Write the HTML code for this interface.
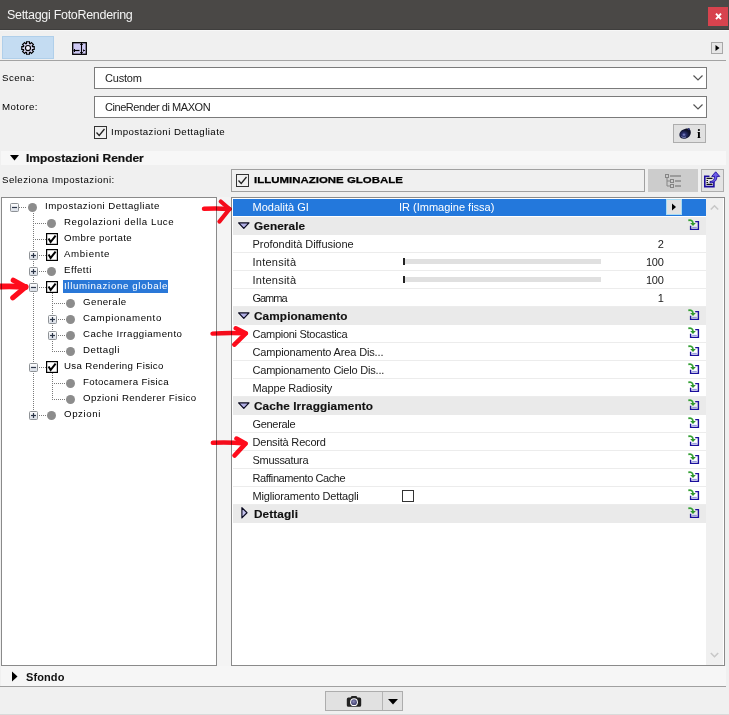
<!DOCTYPE html>
<html><head><meta charset="utf-8"><style>
html,body{margin:0;padding:0;}
body{width:729px;height:715px;overflow:hidden;position:relative;background:#f0f0f0;font-family:"Liberation Sans",sans-serif;}
.a{position:absolute;}
.t{white-space:nowrap;}
svg{display:block;overflow:visible;}
</style></head><body>
<div class="a" style="left:0px;top:0px;width:729px;height:29px;background:#4a4846;"></div>
<div class="a" style="left:0px;top:29px;width:729px;height:1px;background:#3f3e3d;"></div>
<div class="a" style="left:0px;top:30px;width:729px;height:1px;background:#f7f7f7;"></div>
<div class="a t" style="top:8.92px;font-size:12.5px;line-height:12.5px;color:#f4f4f4;left:7px;letter-spacing:-0.3px;">Settaggi FotoRendering</div>
<div class="a" style="left:708px;top:7px;width:20px;height:19px;background:#d7434e;"></div>
<svg class="a" style="left:708px;top:7px;" width="20" height="19" viewBox="0 0 20 19"><path d="M8 6.6 L13 12.2 M13 6.6 L8 12.2" stroke="#fff" stroke-width="1.9" stroke-linecap="butt"/></svg>
<div class="a" style="left:2px;top:36px;width:52px;height:23px;background:#c4dcf2;box-shadow:inset 0 0 0 1px #b0cfea;"></div>
<svg class="a" style="left:21px;top:41px;" width="14" height="14" viewBox="0 0 14 14"><path d="M5.55 2.53 L5.55 0.77 L8.45 0.77 L8.45 2.53 L9.14 2.81 L10.38 1.57 L12.43 3.62 L11.19 4.86 L11.47 5.55 L13.23 5.55 L13.23 8.45 L11.47 8.45 L11.19 9.14 L12.43 10.38 L10.38 12.43 L9.14 11.19 L8.45 11.47 L8.45 13.23 L5.55 13.23 L5.55 11.47 L4.86 11.19 L3.62 12.43 L1.57 10.38 L2.81 9.14 L2.53 8.45 L0.77 8.45 L0.77 5.55 L2.53 5.55 L2.81 4.86 L1.57 3.62 L3.62 1.57 L4.86 2.81Z" fill="#dcdcf6" stroke="#000" stroke-width="1.15" stroke-linejoin="miter"/><circle cx="7" cy="7" r="2.55" fill="#f4f4ff" stroke="#000" stroke-width="1.15"/></svg>
<svg class="a" style="left:72px;top:42px;" width="15" height="13" viewBox="0 0 15 13"><rect x="0.7" y="0.7" width="13.6" height="11.6" fill="#cfcaf4" stroke="#000" stroke-width="1.3"/><path d="M9.5 1 V12" stroke="#000" stroke-width="1.1"/><path d="M8.2 2.5 H10.8 M8.2 10.5 H10.8" stroke="#000" stroke-width="1"/><path d="M1.5 8.5 H7.5" stroke="#000" stroke-width="1.2"/><path d="M2.5 7 V10" stroke="#000" stroke-width="1"/><path d="M13 8.5 H11.3 M12 7.6 L11 8.5 L12 9.4" stroke="#000" stroke-width="0.9" fill="none"/></svg>
<div class="a" style="left:711px;top:42px;width:12px;height:12px;background:#e6e6e6;box-shadow:inset 0 0 0 1px #a8a8a8;"></div>
<svg class="a" style="left:711px;top:42px;" width="12" height="12" viewBox="0 0 12 12"><path d="M4.5 3 L8.5 6 L4.5 9 Z" fill="#000"/></svg>
<div class="a" style="left:0px;top:60px;width:726px;height:1px;background:#a3a3a3;"></div>
<div class="a t" style="top:72.59px;font-size:9.7px;line-height:9.7px;color:#000;left:2px;letter-spacing:0.45px;">Scena:</div>
<div class="a" style="left:94px;top:67px;width:613px;height:22px;background:#fff;box-shadow:inset 0 0 0 1px #7a7a7a;"></div>
<div class="a t" style="top:72.69px;font-size:11px;line-height:11px;color:#222;left:105px;letter-spacing:-0.2px;">Custom</div>
<svg class="a" style="left:692px;top:74px;" width="12" height="8" viewBox="0 0 12 8"><path d="M1.5 1.5 L6 6 L10.5 1.5" stroke="#555" stroke-width="1.2" fill="none"/></svg>
<div class="a t" style="top:101.69px;font-size:9.7px;line-height:9.7px;color:#000;left:2px;letter-spacing:0.45px;">Motore:</div>
<div class="a" style="left:94px;top:96px;width:613px;height:22px;background:#fff;box-shadow:inset 0 0 0 1px #7a7a7a;"></div>
<div class="a t" style="top:101.69px;font-size:11px;line-height:11px;color:#222;left:105px;letter-spacing:-0.45px;">CineRender di MAXON</div>
<svg class="a" style="left:692px;top:103px;" width="12" height="8" viewBox="0 0 12 8"><path d="M1.5 1.5 L6 6 L10.5 1.5" stroke="#555" stroke-width="1.2" fill="none"/></svg>
<div class="a" style="left:94px;top:126px;width:13px;height:13px;box-shadow:inset 0 0 0 1px #333;"></div>
<svg class="a" style="left:94px;top:126px;" width="13" height="13" viewBox="0 0 13 13"><path d="M2.5 6.5 L5.2 9.5 L10.5 3" stroke="#222" stroke-width="1.3" fill="none"/></svg>
<div class="a t" style="top:127.29px;font-size:9.7px;line-height:9.7px;color:#000;left:111px;letter-spacing:0.45px;">Impostazioni Dettagliate</div>
<div class="a" style="left:673px;top:124px;width:33px;height:19px;background:#e1e1e1;box-shadow:inset 0 0 0 1px #adadad;"></div>
<svg class="a" style="left:678px;top:127px;" width="15" height="13" viewBox="0 0 15 13"><defs><radialGradient id="cg" cx="0.4" cy="0.6" r="0.55"><stop offset="0" stop-color="#8890d0"/><stop offset="0.3" stop-color="#2a3070"/><stop offset="0.8" stop-color="#101430"/><stop offset="1" stop-color="#0c0e24"/></radialGradient></defs><path d="M7.5 1.8 C10.5 1 13 2.2 12.8 5.5 C12.6 9.5 9.5 12 5.5 11.8 C2.3 11.6 0.8 9 1.6 6.3 C2.3 4 4.8 2.4 7.5 1.8Z" fill="url(#cg)"/><circle cx="10.8" cy="2.2" r="1.1" fill="#2a3070"/><path d="M3.5 9.5 C4.5 10.5 6.5 10.8 8 10" stroke="#c8d0ff" stroke-width="0.8" fill="none" opacity="0.7"/></svg>
<div class="a t" style="top:126.57px;font-size:13.5px;line-height:13.5px;color:#000;left:697px;font-weight:bold;font-family:'Liberation Serif', serif;">i</div>
<div class="a" style="left:1px;top:151px;width:725px;height:14px;background:#f7f7f7;"></div>
<svg class="a" style="left:9px;top:154px;" width="11" height="8" viewBox="0 0 11 8"><path d="M1 1 L10 1 L5.5 6.5 Z" fill="#000"/></svg>
<div class="a t" style="top:152.83px;font-size:11.3px;line-height:11.3px;color:#111;left:26px;font-weight:bold;transform:scaleX(1.06);transform-origin:0 0;-webkit-text-stroke:0.2px #111;">Impostazioni Render</div>
<div class="a t" style="top:175.49px;font-size:9.7px;line-height:9.7px;color:#000;left:2px;letter-spacing:0.45px;">Seleziona Impostazioni:</div>
<div class="a" style="left:231px;top:169px;width:414px;height:23px;background:#f0f0f0;box-shadow:inset 0 0 0 1px #a0a0a0;"></div>
<div class="a" style="left:236px;top:174px;width:13px;height:13px;box-shadow:inset 0 0 0 1px #333;"></div>
<svg class="a" style="left:236px;top:174px;" width="13" height="13" viewBox="0 0 13 13"><path d="M2.5 6.5 L5.2 9.5 L10.5 3" stroke="#222" stroke-width="1.3" fill="none"/></svg>
<div class="a t" style="top:175.42px;font-size:9.9px;line-height:9.9px;color:#000;left:253.5px;font-weight:bold;transform:scaleX(1.16);transform-origin:0 0;-webkit-text-stroke:0.25px #000;">ILLUMINAZIONE GLOBALE</div>
<div class="a" style="left:648px;top:169px;width:50px;height:23px;background:#cccccc;"></div>
<svg class="a" style="left:664px;top:173px;" width="18" height="16" viewBox="0 0 18 16"><g fill="none" stroke="#858585" stroke-width="1"><rect x="1.5" y="1.5" width="3" height="3"/><rect x="6.5" y="6.5" width="3" height="3"/><rect x="6.5" y="11.5" width="3" height="3"/><path d="M3 4.5 V13 H6.5 M3 8 H6.5"/></g><g stroke="#8a8a8a" stroke-width="1.4"><path d="M6 3 H17 M11 8 H17 M11 13 H17"/></g></svg>
<div class="a" style="left:701px;top:169px;width:23px;height:23px;background:#e4e4e4;box-shadow:inset 0 0 0 1px #adadad;"></div>
<svg class="a" style="left:703px;top:171px;" width="19" height="18" viewBox="0 0 19 18"><path d="M6.5 5.2 H1.8 V15.6 H10.9 V11" stroke="#1c0c9e" stroke-width="1.6" fill="none"/><path d="M3.5 7.4 H9.5 M3.5 13.3 H9.5" stroke="#111" stroke-width="1.2"/><path d="M3.5 9.5 H5 M3.5 11.5 H5" stroke="#111" stroke-width="1"/><path d="M7 10.5 C10 10.5 11.5 9 11.5 5.4 H8.7 L12.7 0.8 L16.7 5.4 H13.9 C13.9 9.5 11.5 12 7 11.8 Z" fill="#6c5ce8" stroke="#1c0c9e" stroke-width="0.9" stroke-linejoin="round"/></svg>
<div class="a" style="left:217px;top:197px;width:14px;height:469px;background:#f4f4f4;"></div>
<div class="a" style="left:1px;top:197px;width:216px;height:469px;background:#fff;box-shadow:inset 0 0 0 1px #8a8a8a;"></div>
<div class="a" style="left:231px;top:197px;width:494px;height:469px;background:#fff;box-shadow:inset 0 0 0 1px #8a8a8a;"></div>
<div class="a" style="left:706px;top:198px;width:17px;height:467px;background:#f0f0f0;"></div>
<div class="a" style="left:33px;top:213px;width:1px;height:1px;background:#7a7a7a;"></div>
<div class="a" style="left:33px;top:215px;width:1px;height:1px;background:#7a7a7a;"></div>
<div class="a" style="left:33px;top:217px;width:1px;height:1px;background:#7a7a7a;"></div>
<div class="a" style="left:33px;top:219px;width:1px;height:1px;background:#7a7a7a;"></div>
<div class="a" style="left:33px;top:221px;width:1px;height:1px;background:#7a7a7a;"></div>
<div class="a" style="left:33px;top:223px;width:1px;height:1px;background:#7a7a7a;"></div>
<div class="a" style="left:33px;top:225px;width:1px;height:1px;background:#7a7a7a;"></div>
<div class="a" style="left:33px;top:227px;width:1px;height:1px;background:#7a7a7a;"></div>
<div class="a" style="left:33px;top:229px;width:1px;height:1px;background:#7a7a7a;"></div>
<div class="a" style="left:33px;top:231px;width:1px;height:1px;background:#7a7a7a;"></div>
<div class="a" style="left:33px;top:233px;width:1px;height:1px;background:#7a7a7a;"></div>
<div class="a" style="left:33px;top:235px;width:1px;height:1px;background:#7a7a7a;"></div>
<div class="a" style="left:33px;top:237px;width:1px;height:1px;background:#7a7a7a;"></div>
<div class="a" style="left:33px;top:239px;width:1px;height:1px;background:#7a7a7a;"></div>
<div class="a" style="left:33px;top:241px;width:1px;height:1px;background:#7a7a7a;"></div>
<div class="a" style="left:33px;top:243px;width:1px;height:1px;background:#7a7a7a;"></div>
<div class="a" style="left:33px;top:245px;width:1px;height:1px;background:#7a7a7a;"></div>
<div class="a" style="left:33px;top:247px;width:1px;height:1px;background:#7a7a7a;"></div>
<div class="a" style="left:33px;top:249px;width:1px;height:1px;background:#7a7a7a;"></div>
<div class="a" style="left:33px;top:251px;width:1px;height:1px;background:#7a7a7a;"></div>
<div class="a" style="left:33px;top:253px;width:1px;height:1px;background:#7a7a7a;"></div>
<div class="a" style="left:33px;top:255px;width:1px;height:1px;background:#7a7a7a;"></div>
<div class="a" style="left:33px;top:257px;width:1px;height:1px;background:#7a7a7a;"></div>
<div class="a" style="left:33px;top:259px;width:1px;height:1px;background:#7a7a7a;"></div>
<div class="a" style="left:33px;top:261px;width:1px;height:1px;background:#7a7a7a;"></div>
<div class="a" style="left:33px;top:263px;width:1px;height:1px;background:#7a7a7a;"></div>
<div class="a" style="left:33px;top:265px;width:1px;height:1px;background:#7a7a7a;"></div>
<div class="a" style="left:33px;top:267px;width:1px;height:1px;background:#7a7a7a;"></div>
<div class="a" style="left:33px;top:269px;width:1px;height:1px;background:#7a7a7a;"></div>
<div class="a" style="left:33px;top:271px;width:1px;height:1px;background:#7a7a7a;"></div>
<div class="a" style="left:33px;top:273px;width:1px;height:1px;background:#7a7a7a;"></div>
<div class="a" style="left:33px;top:275px;width:1px;height:1px;background:#7a7a7a;"></div>
<div class="a" style="left:33px;top:277px;width:1px;height:1px;background:#7a7a7a;"></div>
<div class="a" style="left:33px;top:279px;width:1px;height:1px;background:#7a7a7a;"></div>
<div class="a" style="left:33px;top:281px;width:1px;height:1px;background:#7a7a7a;"></div>
<div class="a" style="left:33px;top:283px;width:1px;height:1px;background:#7a7a7a;"></div>
<div class="a" style="left:33px;top:285px;width:1px;height:1px;background:#7a7a7a;"></div>
<div class="a" style="left:33px;top:287px;width:1px;height:1px;background:#7a7a7a;"></div>
<div class="a" style="left:33px;top:289px;width:1px;height:1px;background:#7a7a7a;"></div>
<div class="a" style="left:33px;top:291px;width:1px;height:1px;background:#7a7a7a;"></div>
<div class="a" style="left:33px;top:293px;width:1px;height:1px;background:#7a7a7a;"></div>
<div class="a" style="left:33px;top:295px;width:1px;height:1px;background:#7a7a7a;"></div>
<div class="a" style="left:33px;top:297px;width:1px;height:1px;background:#7a7a7a;"></div>
<div class="a" style="left:33px;top:299px;width:1px;height:1px;background:#7a7a7a;"></div>
<div class="a" style="left:33px;top:301px;width:1px;height:1px;background:#7a7a7a;"></div>
<div class="a" style="left:33px;top:303px;width:1px;height:1px;background:#7a7a7a;"></div>
<div class="a" style="left:33px;top:305px;width:1px;height:1px;background:#7a7a7a;"></div>
<div class="a" style="left:33px;top:307px;width:1px;height:1px;background:#7a7a7a;"></div>
<div class="a" style="left:33px;top:309px;width:1px;height:1px;background:#7a7a7a;"></div>
<div class="a" style="left:33px;top:311px;width:1px;height:1px;background:#7a7a7a;"></div>
<div class="a" style="left:33px;top:313px;width:1px;height:1px;background:#7a7a7a;"></div>
<div class="a" style="left:33px;top:315px;width:1px;height:1px;background:#7a7a7a;"></div>
<div class="a" style="left:33px;top:317px;width:1px;height:1px;background:#7a7a7a;"></div>
<div class="a" style="left:33px;top:319px;width:1px;height:1px;background:#7a7a7a;"></div>
<div class="a" style="left:33px;top:321px;width:1px;height:1px;background:#7a7a7a;"></div>
<div class="a" style="left:33px;top:323px;width:1px;height:1px;background:#7a7a7a;"></div>
<div class="a" style="left:33px;top:325px;width:1px;height:1px;background:#7a7a7a;"></div>
<div class="a" style="left:33px;top:327px;width:1px;height:1px;background:#7a7a7a;"></div>
<div class="a" style="left:33px;top:329px;width:1px;height:1px;background:#7a7a7a;"></div>
<div class="a" style="left:33px;top:331px;width:1px;height:1px;background:#7a7a7a;"></div>
<div class="a" style="left:33px;top:333px;width:1px;height:1px;background:#7a7a7a;"></div>
<div class="a" style="left:33px;top:335px;width:1px;height:1px;background:#7a7a7a;"></div>
<div class="a" style="left:33px;top:337px;width:1px;height:1px;background:#7a7a7a;"></div>
<div class="a" style="left:33px;top:339px;width:1px;height:1px;background:#7a7a7a;"></div>
<div class="a" style="left:33px;top:341px;width:1px;height:1px;background:#7a7a7a;"></div>
<div class="a" style="left:33px;top:343px;width:1px;height:1px;background:#7a7a7a;"></div>
<div class="a" style="left:33px;top:345px;width:1px;height:1px;background:#7a7a7a;"></div>
<div class="a" style="left:33px;top:347px;width:1px;height:1px;background:#7a7a7a;"></div>
<div class="a" style="left:33px;top:349px;width:1px;height:1px;background:#7a7a7a;"></div>
<div class="a" style="left:33px;top:351px;width:1px;height:1px;background:#7a7a7a;"></div>
<div class="a" style="left:33px;top:353px;width:1px;height:1px;background:#7a7a7a;"></div>
<div class="a" style="left:33px;top:355px;width:1px;height:1px;background:#7a7a7a;"></div>
<div class="a" style="left:33px;top:357px;width:1px;height:1px;background:#7a7a7a;"></div>
<div class="a" style="left:33px;top:359px;width:1px;height:1px;background:#7a7a7a;"></div>
<div class="a" style="left:33px;top:361px;width:1px;height:1px;background:#7a7a7a;"></div>
<div class="a" style="left:33px;top:363px;width:1px;height:1px;background:#7a7a7a;"></div>
<div class="a" style="left:33px;top:365px;width:1px;height:1px;background:#7a7a7a;"></div>
<div class="a" style="left:33px;top:367px;width:1px;height:1px;background:#7a7a7a;"></div>
<div class="a" style="left:33px;top:369px;width:1px;height:1px;background:#7a7a7a;"></div>
<div class="a" style="left:33px;top:371px;width:1px;height:1px;background:#7a7a7a;"></div>
<div class="a" style="left:33px;top:373px;width:1px;height:1px;background:#7a7a7a;"></div>
<div class="a" style="left:33px;top:375px;width:1px;height:1px;background:#7a7a7a;"></div>
<div class="a" style="left:33px;top:377px;width:1px;height:1px;background:#7a7a7a;"></div>
<div class="a" style="left:33px;top:379px;width:1px;height:1px;background:#7a7a7a;"></div>
<div class="a" style="left:33px;top:381px;width:1px;height:1px;background:#7a7a7a;"></div>
<div class="a" style="left:33px;top:383px;width:1px;height:1px;background:#7a7a7a;"></div>
<div class="a" style="left:33px;top:385px;width:1px;height:1px;background:#7a7a7a;"></div>
<div class="a" style="left:33px;top:387px;width:1px;height:1px;background:#7a7a7a;"></div>
<div class="a" style="left:33px;top:389px;width:1px;height:1px;background:#7a7a7a;"></div>
<div class="a" style="left:33px;top:391px;width:1px;height:1px;background:#7a7a7a;"></div>
<div class="a" style="left:33px;top:393px;width:1px;height:1px;background:#7a7a7a;"></div>
<div class="a" style="left:33px;top:395px;width:1px;height:1px;background:#7a7a7a;"></div>
<div class="a" style="left:33px;top:397px;width:1px;height:1px;background:#7a7a7a;"></div>
<div class="a" style="left:33px;top:399px;width:1px;height:1px;background:#7a7a7a;"></div>
<div class="a" style="left:33px;top:401px;width:1px;height:1px;background:#7a7a7a;"></div>
<div class="a" style="left:33px;top:403px;width:1px;height:1px;background:#7a7a7a;"></div>
<div class="a" style="left:33px;top:405px;width:1px;height:1px;background:#7a7a7a;"></div>
<div class="a" style="left:33px;top:407px;width:1px;height:1px;background:#7a7a7a;"></div>
<div class="a" style="left:33px;top:409px;width:1px;height:1px;background:#7a7a7a;"></div>
<div class="a" style="left:33px;top:411px;width:1px;height:1px;background:#7a7a7a;"></div>
<div class="a" style="left:33px;top:413px;width:1px;height:1px;background:#7a7a7a;"></div>
<div class="a" style="left:52px;top:293px;width:1px;height:1px;background:#7a7a7a;"></div>
<div class="a" style="left:52px;top:295px;width:1px;height:1px;background:#7a7a7a;"></div>
<div class="a" style="left:52px;top:297px;width:1px;height:1px;background:#7a7a7a;"></div>
<div class="a" style="left:52px;top:299px;width:1px;height:1px;background:#7a7a7a;"></div>
<div class="a" style="left:52px;top:301px;width:1px;height:1px;background:#7a7a7a;"></div>
<div class="a" style="left:52px;top:303px;width:1px;height:1px;background:#7a7a7a;"></div>
<div class="a" style="left:52px;top:305px;width:1px;height:1px;background:#7a7a7a;"></div>
<div class="a" style="left:52px;top:307px;width:1px;height:1px;background:#7a7a7a;"></div>
<div class="a" style="left:52px;top:309px;width:1px;height:1px;background:#7a7a7a;"></div>
<div class="a" style="left:52px;top:311px;width:1px;height:1px;background:#7a7a7a;"></div>
<div class="a" style="left:52px;top:313px;width:1px;height:1px;background:#7a7a7a;"></div>
<div class="a" style="left:52px;top:315px;width:1px;height:1px;background:#7a7a7a;"></div>
<div class="a" style="left:52px;top:317px;width:1px;height:1px;background:#7a7a7a;"></div>
<div class="a" style="left:52px;top:319px;width:1px;height:1px;background:#7a7a7a;"></div>
<div class="a" style="left:52px;top:321px;width:1px;height:1px;background:#7a7a7a;"></div>
<div class="a" style="left:52px;top:323px;width:1px;height:1px;background:#7a7a7a;"></div>
<div class="a" style="left:52px;top:325px;width:1px;height:1px;background:#7a7a7a;"></div>
<div class="a" style="left:52px;top:327px;width:1px;height:1px;background:#7a7a7a;"></div>
<div class="a" style="left:52px;top:329px;width:1px;height:1px;background:#7a7a7a;"></div>
<div class="a" style="left:52px;top:331px;width:1px;height:1px;background:#7a7a7a;"></div>
<div class="a" style="left:52px;top:333px;width:1px;height:1px;background:#7a7a7a;"></div>
<div class="a" style="left:52px;top:335px;width:1px;height:1px;background:#7a7a7a;"></div>
<div class="a" style="left:52px;top:337px;width:1px;height:1px;background:#7a7a7a;"></div>
<div class="a" style="left:52px;top:339px;width:1px;height:1px;background:#7a7a7a;"></div>
<div class="a" style="left:52px;top:341px;width:1px;height:1px;background:#7a7a7a;"></div>
<div class="a" style="left:52px;top:343px;width:1px;height:1px;background:#7a7a7a;"></div>
<div class="a" style="left:52px;top:345px;width:1px;height:1px;background:#7a7a7a;"></div>
<div class="a" style="left:52px;top:347px;width:1px;height:1px;background:#7a7a7a;"></div>
<div class="a" style="left:52px;top:349px;width:1px;height:1px;background:#7a7a7a;"></div>
<div class="a" style="left:52px;top:373px;width:1px;height:1px;background:#7a7a7a;"></div>
<div class="a" style="left:52px;top:375px;width:1px;height:1px;background:#7a7a7a;"></div>
<div class="a" style="left:52px;top:377px;width:1px;height:1px;background:#7a7a7a;"></div>
<div class="a" style="left:52px;top:379px;width:1px;height:1px;background:#7a7a7a;"></div>
<div class="a" style="left:52px;top:381px;width:1px;height:1px;background:#7a7a7a;"></div>
<div class="a" style="left:52px;top:383px;width:1px;height:1px;background:#7a7a7a;"></div>
<div class="a" style="left:52px;top:385px;width:1px;height:1px;background:#7a7a7a;"></div>
<div class="a" style="left:52px;top:387px;width:1px;height:1px;background:#7a7a7a;"></div>
<div class="a" style="left:52px;top:389px;width:1px;height:1px;background:#7a7a7a;"></div>
<div class="a" style="left:52px;top:391px;width:1px;height:1px;background:#7a7a7a;"></div>
<div class="a" style="left:52px;top:393px;width:1px;height:1px;background:#7a7a7a;"></div>
<div class="a" style="left:52px;top:395px;width:1px;height:1px;background:#7a7a7a;"></div>
<div class="a" style="left:52px;top:397px;width:1px;height:1px;background:#7a7a7a;"></div>
<div class="a" style="left:19px;top:207px;width:1px;height:1px;background:#7a7a7a;"></div>
<div class="a" style="left:21px;top:207px;width:1px;height:1px;background:#7a7a7a;"></div>
<div class="a" style="left:23px;top:207px;width:1px;height:1px;background:#7a7a7a;"></div>
<div class="a" style="left:25px;top:207px;width:1px;height:1px;background:#7a7a7a;"></div>
<svg class="a" style="left:10px;top:203px;" width="9" height="9" viewBox="0 0 9 9"><defs><linearGradient id="eg" x1="0" y1="0" x2="0" y2="1"><stop offset="0" stop-color="#ffffff"/><stop offset="1" stop-color="#d8dde6"/></linearGradient></defs><rect x="0.5" y="0.5" width="8" height="8" fill="url(#eg)" stroke="#8e9296" stroke-width="1" rx="1"/><path d="M2 4.5 H7" stroke="#2c3648" stroke-width="1.2"/></svg>
<svg class="a" style="left:28.0px;top:202.5px;" width="9" height="9" viewBox="0 0 9 9"><circle cx="4.5" cy="4.5" r="4.5" fill="#8c8c8c"/></svg>
<div class="a t" style="top:200.69px;font-size:9.7px;line-height:9.7px;color:#000;left:45px;letter-spacing:0.48px;">Impostazioni Dettagliate</div>
<div class="a" style="left:33px;top:223px;width:1px;height:1px;background:#7a7a7a;"></div>
<div class="a" style="left:35px;top:223px;width:1px;height:1px;background:#7a7a7a;"></div>
<div class="a" style="left:37px;top:223px;width:1px;height:1px;background:#7a7a7a;"></div>
<div class="a" style="left:39px;top:223px;width:1px;height:1px;background:#7a7a7a;"></div>
<div class="a" style="left:41px;top:223px;width:1px;height:1px;background:#7a7a7a;"></div>
<div class="a" style="left:43px;top:223px;width:1px;height:1px;background:#7a7a7a;"></div>
<div class="a" style="left:45px;top:223px;width:1px;height:1px;background:#7a7a7a;"></div>
<svg class="a" style="left:47.0px;top:218.5px;" width="9" height="9" viewBox="0 0 9 9"><circle cx="4.5" cy="4.5" r="4.5" fill="#8c8c8c"/></svg>
<div class="a t" style="top:216.69px;font-size:9.7px;line-height:9.7px;color:#000;left:64px;letter-spacing:0.58px;">Regolazioni della Luce</div>
<div class="a" style="left:33px;top:239px;width:1px;height:1px;background:#7a7a7a;"></div>
<div class="a" style="left:35px;top:239px;width:1px;height:1px;background:#7a7a7a;"></div>
<div class="a" style="left:37px;top:239px;width:1px;height:1px;background:#7a7a7a;"></div>
<div class="a" style="left:39px;top:239px;width:1px;height:1px;background:#7a7a7a;"></div>
<div class="a" style="left:41px;top:239px;width:1px;height:1px;background:#7a7a7a;"></div>
<div class="a" style="left:43px;top:239px;width:1px;height:1px;background:#7a7a7a;"></div>
<div class="a" style="left:45px;top:239px;width:1px;height:1px;background:#7a7a7a;"></div>
<svg class="a" style="left:45.5px;top:233px;" width="12" height="12" viewBox="0 0 12 12"><rect x="0.6" y="0.6" width="10.8" height="10.8" fill="#fff" stroke="#000" stroke-width="1.2"/><path d="M2.6 5.6 L4.6 9 L9.6 2.6" stroke="#000" stroke-width="2" fill="none" stroke-linejoin="miter"/></svg>
<div class="a t" style="top:232.69px;font-size:9.7px;line-height:9.7px;color:#000;left:64px;letter-spacing:0.44px;">Ombre portate</div>
<div class="a" style="left:33px;top:255px;width:1px;height:1px;background:#7a7a7a;"></div>
<div class="a" style="left:35px;top:255px;width:1px;height:1px;background:#7a7a7a;"></div>
<div class="a" style="left:37px;top:255px;width:1px;height:1px;background:#7a7a7a;"></div>
<div class="a" style="left:39px;top:255px;width:1px;height:1px;background:#7a7a7a;"></div>
<div class="a" style="left:41px;top:255px;width:1px;height:1px;background:#7a7a7a;"></div>
<div class="a" style="left:43px;top:255px;width:1px;height:1px;background:#7a7a7a;"></div>
<div class="a" style="left:45px;top:255px;width:1px;height:1px;background:#7a7a7a;"></div>
<svg class="a" style="left:29px;top:251px;" width="9" height="9" viewBox="0 0 9 9"><defs><linearGradient id="eg" x1="0" y1="0" x2="0" y2="1"><stop offset="0" stop-color="#ffffff"/><stop offset="1" stop-color="#d8dde6"/></linearGradient></defs><rect x="0.5" y="0.5" width="8" height="8" fill="url(#eg)" stroke="#8e9296" stroke-width="1" rx="1"/><path d="M2 4.5 H7" stroke="#2c3648" stroke-width="1.2"/><path d="M4.5 2 V7" stroke="#2c3648" stroke-width="1.2"/></svg>
<svg class="a" style="left:45.5px;top:249px;" width="12" height="12" viewBox="0 0 12 12"><rect x="0.6" y="0.6" width="10.8" height="10.8" fill="#fff" stroke="#000" stroke-width="1.2"/><path d="M2.6 5.6 L4.6 9 L9.6 2.6" stroke="#000" stroke-width="2" fill="none" stroke-linejoin="miter"/></svg>
<div class="a t" style="top:248.69px;font-size:9.7px;line-height:9.7px;color:#000;left:64px;letter-spacing:0.65px;">Ambiente</div>
<div class="a" style="left:33px;top:271px;width:1px;height:1px;background:#7a7a7a;"></div>
<div class="a" style="left:35px;top:271px;width:1px;height:1px;background:#7a7a7a;"></div>
<div class="a" style="left:37px;top:271px;width:1px;height:1px;background:#7a7a7a;"></div>
<div class="a" style="left:39px;top:271px;width:1px;height:1px;background:#7a7a7a;"></div>
<div class="a" style="left:41px;top:271px;width:1px;height:1px;background:#7a7a7a;"></div>
<div class="a" style="left:43px;top:271px;width:1px;height:1px;background:#7a7a7a;"></div>
<div class="a" style="left:45px;top:271px;width:1px;height:1px;background:#7a7a7a;"></div>
<svg class="a" style="left:29px;top:267px;" width="9" height="9" viewBox="0 0 9 9"><defs><linearGradient id="eg" x1="0" y1="0" x2="0" y2="1"><stop offset="0" stop-color="#ffffff"/><stop offset="1" stop-color="#d8dde6"/></linearGradient></defs><rect x="0.5" y="0.5" width="8" height="8" fill="url(#eg)" stroke="#8e9296" stroke-width="1" rx="1"/><path d="M2 4.5 H7" stroke="#2c3648" stroke-width="1.2"/><path d="M4.5 2 V7" stroke="#2c3648" stroke-width="1.2"/></svg>
<svg class="a" style="left:47.0px;top:266.5px;" width="9" height="9" viewBox="0 0 9 9"><circle cx="4.5" cy="4.5" r="4.5" fill="#8c8c8c"/></svg>
<div class="a t" style="top:264.69px;font-size:9.7px;line-height:9.7px;color:#000;left:64px;letter-spacing:0.45px;">Effetti</div>
<div class="a" style="left:33px;top:287px;width:1px;height:1px;background:#7a7a7a;"></div>
<div class="a" style="left:35px;top:287px;width:1px;height:1px;background:#7a7a7a;"></div>
<div class="a" style="left:37px;top:287px;width:1px;height:1px;background:#7a7a7a;"></div>
<div class="a" style="left:39px;top:287px;width:1px;height:1px;background:#7a7a7a;"></div>
<div class="a" style="left:41px;top:287px;width:1px;height:1px;background:#7a7a7a;"></div>
<div class="a" style="left:43px;top:287px;width:1px;height:1px;background:#7a7a7a;"></div>
<div class="a" style="left:45px;top:287px;width:1px;height:1px;background:#7a7a7a;"></div>
<svg class="a" style="left:29px;top:283px;" width="9" height="9" viewBox="0 0 9 9"><defs><linearGradient id="eg" x1="0" y1="0" x2="0" y2="1"><stop offset="0" stop-color="#ffffff"/><stop offset="1" stop-color="#d8dde6"/></linearGradient></defs><rect x="0.5" y="0.5" width="8" height="8" fill="url(#eg)" stroke="#8e9296" stroke-width="1" rx="1"/><path d="M2 4.5 H7" stroke="#2c3648" stroke-width="1.2"/></svg>
<svg class="a" style="left:45.5px;top:281px;" width="12" height="12" viewBox="0 0 12 12"><rect x="0.6" y="0.6" width="10.8" height="10.8" fill="#fff" stroke="#000" stroke-width="1.2"/><path d="M2.6 5.6 L4.6 9 L9.6 2.6" stroke="#000" stroke-width="2" fill="none" stroke-linejoin="miter"/></svg>
<div class="a" style="left:63px;top:280px;width:105px;height:13px;background:#2a78d8;"></div>
<div class="a t" style="top:280.69px;font-size:9.7px;line-height:9.7px;color:#fff;left:64px;letter-spacing:0.65px;">Illuminazione globale</div>
<div class="a" style="left:52px;top:303px;width:1px;height:1px;background:#7a7a7a;"></div>
<div class="a" style="left:54px;top:303px;width:1px;height:1px;background:#7a7a7a;"></div>
<div class="a" style="left:56px;top:303px;width:1px;height:1px;background:#7a7a7a;"></div>
<div class="a" style="left:58px;top:303px;width:1px;height:1px;background:#7a7a7a;"></div>
<div class="a" style="left:60px;top:303px;width:1px;height:1px;background:#7a7a7a;"></div>
<div class="a" style="left:62px;top:303px;width:1px;height:1px;background:#7a7a7a;"></div>
<div class="a" style="left:64px;top:303px;width:1px;height:1px;background:#7a7a7a;"></div>
<svg class="a" style="left:66.0px;top:298.5px;" width="9" height="9" viewBox="0 0 9 9"><circle cx="4.5" cy="4.5" r="4.5" fill="#8c8c8c"/></svg>
<div class="a t" style="top:296.69px;font-size:9.7px;line-height:9.7px;color:#000;left:83px;letter-spacing:0.48px;">Generale</div>
<div class="a" style="left:52px;top:319px;width:1px;height:1px;background:#7a7a7a;"></div>
<div class="a" style="left:54px;top:319px;width:1px;height:1px;background:#7a7a7a;"></div>
<div class="a" style="left:56px;top:319px;width:1px;height:1px;background:#7a7a7a;"></div>
<div class="a" style="left:58px;top:319px;width:1px;height:1px;background:#7a7a7a;"></div>
<div class="a" style="left:60px;top:319px;width:1px;height:1px;background:#7a7a7a;"></div>
<div class="a" style="left:62px;top:319px;width:1px;height:1px;background:#7a7a7a;"></div>
<div class="a" style="left:64px;top:319px;width:1px;height:1px;background:#7a7a7a;"></div>
<svg class="a" style="left:48px;top:315px;" width="9" height="9" viewBox="0 0 9 9"><defs><linearGradient id="eg" x1="0" y1="0" x2="0" y2="1"><stop offset="0" stop-color="#ffffff"/><stop offset="1" stop-color="#d8dde6"/></linearGradient></defs><rect x="0.5" y="0.5" width="8" height="8" fill="url(#eg)" stroke="#8e9296" stroke-width="1" rx="1"/><path d="M2 4.5 H7" stroke="#2c3648" stroke-width="1.2"/><path d="M4.5 2 V7" stroke="#2c3648" stroke-width="1.2"/></svg>
<svg class="a" style="left:66.0px;top:314.5px;" width="9" height="9" viewBox="0 0 9 9"><circle cx="4.5" cy="4.5" r="4.5" fill="#8c8c8c"/></svg>
<div class="a t" style="top:312.69px;font-size:9.7px;line-height:9.7px;color:#000;left:83px;letter-spacing:0.6px;">Campionamento</div>
<div class="a" style="left:52px;top:335px;width:1px;height:1px;background:#7a7a7a;"></div>
<div class="a" style="left:54px;top:335px;width:1px;height:1px;background:#7a7a7a;"></div>
<div class="a" style="left:56px;top:335px;width:1px;height:1px;background:#7a7a7a;"></div>
<div class="a" style="left:58px;top:335px;width:1px;height:1px;background:#7a7a7a;"></div>
<div class="a" style="left:60px;top:335px;width:1px;height:1px;background:#7a7a7a;"></div>
<div class="a" style="left:62px;top:335px;width:1px;height:1px;background:#7a7a7a;"></div>
<div class="a" style="left:64px;top:335px;width:1px;height:1px;background:#7a7a7a;"></div>
<svg class="a" style="left:48px;top:331px;" width="9" height="9" viewBox="0 0 9 9"><defs><linearGradient id="eg" x1="0" y1="0" x2="0" y2="1"><stop offset="0" stop-color="#ffffff"/><stop offset="1" stop-color="#d8dde6"/></linearGradient></defs><rect x="0.5" y="0.5" width="8" height="8" fill="url(#eg)" stroke="#8e9296" stroke-width="1" rx="1"/><path d="M2 4.5 H7" stroke="#2c3648" stroke-width="1.2"/><path d="M4.5 2 V7" stroke="#2c3648" stroke-width="1.2"/></svg>
<svg class="a" style="left:66.0px;top:330.5px;" width="9" height="9" viewBox="0 0 9 9"><circle cx="4.5" cy="4.5" r="4.5" fill="#8c8c8c"/></svg>
<div class="a t" style="top:328.69px;font-size:9.7px;line-height:9.7px;color:#000;left:83px;letter-spacing:0.47px;">Cache Irraggiamento</div>
<div class="a" style="left:52px;top:351px;width:1px;height:1px;background:#7a7a7a;"></div>
<div class="a" style="left:54px;top:351px;width:1px;height:1px;background:#7a7a7a;"></div>
<div class="a" style="left:56px;top:351px;width:1px;height:1px;background:#7a7a7a;"></div>
<div class="a" style="left:58px;top:351px;width:1px;height:1px;background:#7a7a7a;"></div>
<div class="a" style="left:60px;top:351px;width:1px;height:1px;background:#7a7a7a;"></div>
<div class="a" style="left:62px;top:351px;width:1px;height:1px;background:#7a7a7a;"></div>
<div class="a" style="left:64px;top:351px;width:1px;height:1px;background:#7a7a7a;"></div>
<svg class="a" style="left:66.0px;top:346.5px;" width="9" height="9" viewBox="0 0 9 9"><circle cx="4.5" cy="4.5" r="4.5" fill="#8c8c8c"/></svg>
<div class="a t" style="top:344.69px;font-size:9.7px;line-height:9.7px;color:#000;left:83px;letter-spacing:0.5px;">Dettagli</div>
<div class="a" style="left:33px;top:367px;width:1px;height:1px;background:#7a7a7a;"></div>
<div class="a" style="left:35px;top:367px;width:1px;height:1px;background:#7a7a7a;"></div>
<div class="a" style="left:37px;top:367px;width:1px;height:1px;background:#7a7a7a;"></div>
<div class="a" style="left:39px;top:367px;width:1px;height:1px;background:#7a7a7a;"></div>
<div class="a" style="left:41px;top:367px;width:1px;height:1px;background:#7a7a7a;"></div>
<div class="a" style="left:43px;top:367px;width:1px;height:1px;background:#7a7a7a;"></div>
<div class="a" style="left:45px;top:367px;width:1px;height:1px;background:#7a7a7a;"></div>
<svg class="a" style="left:29px;top:363px;" width="9" height="9" viewBox="0 0 9 9"><defs><linearGradient id="eg" x1="0" y1="0" x2="0" y2="1"><stop offset="0" stop-color="#ffffff"/><stop offset="1" stop-color="#d8dde6"/></linearGradient></defs><rect x="0.5" y="0.5" width="8" height="8" fill="url(#eg)" stroke="#8e9296" stroke-width="1" rx="1"/><path d="M2 4.5 H7" stroke="#2c3648" stroke-width="1.2"/></svg>
<svg class="a" style="left:45.5px;top:361px;" width="12" height="12" viewBox="0 0 12 12"><rect x="0.6" y="0.6" width="10.8" height="10.8" fill="#fff" stroke="#000" stroke-width="1.2"/><path d="M2.6 5.6 L4.6 9 L9.6 2.6" stroke="#000" stroke-width="2" fill="none" stroke-linejoin="miter"/></svg>
<div class="a t" style="top:360.69px;font-size:9.7px;line-height:9.7px;color:#000;left:64px;letter-spacing:0.36px;">Usa Rendering Fisico</div>
<div class="a" style="left:52px;top:383px;width:1px;height:1px;background:#7a7a7a;"></div>
<div class="a" style="left:54px;top:383px;width:1px;height:1px;background:#7a7a7a;"></div>
<div class="a" style="left:56px;top:383px;width:1px;height:1px;background:#7a7a7a;"></div>
<div class="a" style="left:58px;top:383px;width:1px;height:1px;background:#7a7a7a;"></div>
<div class="a" style="left:60px;top:383px;width:1px;height:1px;background:#7a7a7a;"></div>
<div class="a" style="left:62px;top:383px;width:1px;height:1px;background:#7a7a7a;"></div>
<div class="a" style="left:64px;top:383px;width:1px;height:1px;background:#7a7a7a;"></div>
<svg class="a" style="left:66.0px;top:378.5px;" width="9" height="9" viewBox="0 0 9 9"><circle cx="4.5" cy="4.5" r="4.5" fill="#8c8c8c"/></svg>
<div class="a t" style="top:376.69px;font-size:9.7px;line-height:9.7px;color:#000;left:83px;letter-spacing:0.37px;">Fotocamera Fisica</div>
<div class="a" style="left:52px;top:399px;width:1px;height:1px;background:#7a7a7a;"></div>
<div class="a" style="left:54px;top:399px;width:1px;height:1px;background:#7a7a7a;"></div>
<div class="a" style="left:56px;top:399px;width:1px;height:1px;background:#7a7a7a;"></div>
<div class="a" style="left:58px;top:399px;width:1px;height:1px;background:#7a7a7a;"></div>
<div class="a" style="left:60px;top:399px;width:1px;height:1px;background:#7a7a7a;"></div>
<div class="a" style="left:62px;top:399px;width:1px;height:1px;background:#7a7a7a;"></div>
<div class="a" style="left:64px;top:399px;width:1px;height:1px;background:#7a7a7a;"></div>
<svg class="a" style="left:66.0px;top:394.5px;" width="9" height="9" viewBox="0 0 9 9"><circle cx="4.5" cy="4.5" r="4.5" fill="#8c8c8c"/></svg>
<div class="a t" style="top:392.69px;font-size:9.7px;line-height:9.7px;color:#000;left:83px;letter-spacing:0.42px;">Opzioni Renderer Fisico</div>
<div class="a" style="left:33px;top:415px;width:1px;height:1px;background:#7a7a7a;"></div>
<div class="a" style="left:35px;top:415px;width:1px;height:1px;background:#7a7a7a;"></div>
<div class="a" style="left:37px;top:415px;width:1px;height:1px;background:#7a7a7a;"></div>
<div class="a" style="left:39px;top:415px;width:1px;height:1px;background:#7a7a7a;"></div>
<div class="a" style="left:41px;top:415px;width:1px;height:1px;background:#7a7a7a;"></div>
<div class="a" style="left:43px;top:415px;width:1px;height:1px;background:#7a7a7a;"></div>
<div class="a" style="left:45px;top:415px;width:1px;height:1px;background:#7a7a7a;"></div>
<svg class="a" style="left:29px;top:411px;" width="9" height="9" viewBox="0 0 9 9"><defs><linearGradient id="eg" x1="0" y1="0" x2="0" y2="1"><stop offset="0" stop-color="#ffffff"/><stop offset="1" stop-color="#d8dde6"/></linearGradient></defs><rect x="0.5" y="0.5" width="8" height="8" fill="url(#eg)" stroke="#8e9296" stroke-width="1" rx="1"/><path d="M2 4.5 H7" stroke="#2c3648" stroke-width="1.2"/><path d="M4.5 2 V7" stroke="#2c3648" stroke-width="1.2"/></svg>
<svg class="a" style="left:47.0px;top:410.5px;" width="9" height="9" viewBox="0 0 9 9"><circle cx="4.5" cy="4.5" r="4.5" fill="#8c8c8c"/></svg>
<div class="a t" style="top:408.69px;font-size:9.7px;line-height:9.7px;color:#000;left:64px;letter-spacing:0.6px;">Opzioni</div>
<div class="a" style="left:233px;top:199px;width:473px;height:17px;background:#2378dc;"></div>
<div class="a t" style="top:202.29px;font-size:11px;line-height:11px;color:#fff;left:252.5px;">Modalità GI</div>
<div class="a t" style="top:202.29px;font-size:11px;line-height:11px;color:#fff;left:399px;">IR (Immagine fissa)</div>
<div class="a" style="left:666px;top:199px;width:16px;height:16px;background:#e2e2e2;box-shadow:inset 0 0 0 1px #a8dcf4;"></div>
<svg class="a" style="left:666px;top:199px;" width="16" height="16" viewBox="0 0 16 16"><path d="M6 4.5 L10 8 L6 11.5 Z" fill="#000"/></svg>
<div class="a" style="left:233px;top:217px;width:473px;height:18px;background:#eaeaea;"></div>
<svg class="a" style="left:238px;top:222px;" width="12" height="8" viewBox="0 0 12 8"><path d="M0.6 0.9 H11 L5.8 6.4 Z" fill="#b2b0e4" stroke="#0a0a20" stroke-width="1.2" stroke-linejoin="round"/></svg>
<div class="a t" style="top:221.49px;font-size:11px;line-height:11px;color:#111;left:253.5px;font-weight:bold;letter-spacing:0.1px;transform:scaleX(1.07);transform-origin:0 0;-webkit-text-stroke:0.15px #111;">Generale</div>
<svg class="a" style="left:688px;top:219px;" width="12" height="12" viewBox="0 0 12 12"><path d="M7.2 2.6 H10.4 V10.4 H2.6 V6.7" stroke="#1a0f9c" stroke-width="1.4" fill="none"/><path d="M4.2 8.4 H8.8" stroke="#7a86d8" stroke-width="0.9"/><path d="M0.3 1.4 C2.5 0.9 4.8 1.0 5.0 4.2" stroke="#34a034" stroke-width="1.7" fill="none"/><path d="M2.2 3.9 L7.8 3.9 L5.0 6.9 Z" fill="#2e962e"/></svg>
<div class="a" style="left:233px;top:252px;width:473px;height:1px;background:#ececec;"></div>
<div class="a t" style="top:238.69px;font-size:11px;line-height:11px;color:#1a1a1a;left:252.5px;letter-spacing:-0.04100000000000037px;">Profondità Diffusione</div>
<div class="a t" style="top:238.69px;font-size:11px;line-height:11px;color:#1a1a1a;right:65.5px;text-align:right;letter-spacing:-0.25px;">2</div>
<div class="a" style="left:233px;top:270px;width:473px;height:1px;background:#ececec;"></div>
<div class="a t" style="top:256.69px;font-size:11px;line-height:11px;color:#1a1a1a;left:252.5px;letter-spacing:0.2400000000000002px;">Intensità</div>
<div class="a t" style="top:256.69px;font-size:11px;line-height:11px;color:#1a1a1a;right:65.5px;text-align:right;letter-spacing:-0.25px;">100</div>
<div class="a" style="left:404px;top:259px;width:197px;height:5px;background:#e0e0e0;"></div>
<div class="a" style="left:403px;top:258px;width:1.5px;height:6.5px;background:#222;"></div>
<div class="a" style="left:233px;top:288px;width:473px;height:1px;background:#ececec;"></div>
<div class="a t" style="top:274.69px;font-size:11px;line-height:11px;color:#1a1a1a;left:252.5px;letter-spacing:0.2400000000000002px;">Intensità</div>
<div class="a t" style="top:274.69px;font-size:11px;line-height:11px;color:#1a1a1a;right:65.5px;text-align:right;letter-spacing:-0.25px;">100</div>
<div class="a" style="left:404px;top:277px;width:197px;height:5px;background:#e0e0e0;"></div>
<div class="a" style="left:403px;top:276px;width:1.5px;height:6.5px;background:#222;"></div>
<div class="a" style="left:233px;top:306px;width:473px;height:1px;background:#ececec;"></div>
<div class="a t" style="top:292.69px;font-size:11px;line-height:11px;color:#1a1a1a;left:252.5px;letter-spacing:-1.0299999999999994px;">Gamma</div>
<div class="a t" style="top:292.69px;font-size:11px;line-height:11px;color:#1a1a1a;right:65.5px;text-align:right;letter-spacing:-0.25px;">1</div>
<div class="a" style="left:233px;top:307px;width:473px;height:18px;background:#eaeaea;"></div>
<svg class="a" style="left:238px;top:312px;" width="12" height="8" viewBox="0 0 12 8"><path d="M0.6 0.9 H11 L5.8 6.4 Z" fill="#b2b0e4" stroke="#0a0a20" stroke-width="1.2" stroke-linejoin="round"/></svg>
<div class="a t" style="top:311.49px;font-size:11px;line-height:11px;color:#111;left:253.5px;font-weight:bold;letter-spacing:0.1px;transform:scaleX(1.07);transform-origin:0 0;-webkit-text-stroke:0.15px #111;">Campionamento</div>
<svg class="a" style="left:688px;top:309px;" width="12" height="12" viewBox="0 0 12 12"><path d="M7.2 2.6 H10.4 V10.4 H2.6 V6.7" stroke="#1a0f9c" stroke-width="1.4" fill="none"/><path d="M4.2 8.4 H8.8" stroke="#7a86d8" stroke-width="0.9"/><path d="M0.3 1.4 C2.5 0.9 4.8 1.0 5.0 4.2" stroke="#34a034" stroke-width="1.7" fill="none"/><path d="M2.2 3.9 L7.8 3.9 L5.0 6.9 Z" fill="#2e962e"/></svg>
<div class="a" style="left:233px;top:342px;width:473px;height:1px;background:#ececec;"></div>
<div class="a t" style="top:328.69px;font-size:11px;line-height:11px;color:#1a1a1a;left:252.5px;letter-spacing:-0.2816666666666663px;">Campioni Stocastica</div>
<svg class="a" style="left:688px;top:327px;" width="12" height="12" viewBox="0 0 12 12"><path d="M7.2 2.6 H10.4 V10.4 H2.6 V6.7" stroke="#1a0f9c" stroke-width="1.4" fill="none"/><path d="M4.2 8.4 H8.8" stroke="#7a86d8" stroke-width="0.9"/><path d="M0.3 1.4 C2.5 0.9 4.8 1.0 5.0 4.2" stroke="#34a034" stroke-width="1.7" fill="none"/><path d="M2.2 3.9 L7.8 3.9 L5.0 6.9 Z" fill="#2e962e"/></svg>
<div class="a" style="left:233px;top:360px;width:473px;height:1px;background:#ececec;"></div>
<div class="a t" style="top:346.69px;font-size:11px;line-height:11px;color:#1a1a1a;left:252.5px;letter-spacing:-0.14666666666666592px;">Campionamento Area Dis...</div>
<svg class="a" style="left:688px;top:345px;" width="12" height="12" viewBox="0 0 12 12"><path d="M7.2 2.6 H10.4 V10.4 H2.6 V6.7" stroke="#1a0f9c" stroke-width="1.4" fill="none"/><path d="M4.2 8.4 H8.8" stroke="#7a86d8" stroke-width="0.9"/><path d="M0.3 1.4 C2.5 0.9 4.8 1.0 5.0 4.2" stroke="#34a034" stroke-width="1.7" fill="none"/><path d="M2.2 3.9 L7.8 3.9 L5.0 6.9 Z" fill="#2e962e"/></svg>
<div class="a" style="left:233px;top:378px;width:473px;height:1px;background:#ececec;"></div>
<div class="a t" style="top:364.69px;font-size:11px;line-height:11px;color:#1a1a1a;left:252.5px;letter-spacing:-0.2059999999999991px;">Campionamento Cielo Dis...</div>
<svg class="a" style="left:688px;top:363px;" width="12" height="12" viewBox="0 0 12 12"><path d="M7.2 2.6 H10.4 V10.4 H2.6 V6.7" stroke="#1a0f9c" stroke-width="1.4" fill="none"/><path d="M4.2 8.4 H8.8" stroke="#7a86d8" stroke-width="0.9"/><path d="M0.3 1.4 C2.5 0.9 4.8 1.0 5.0 4.2" stroke="#34a034" stroke-width="1.7" fill="none"/><path d="M2.2 3.9 L7.8 3.9 L5.0 6.9 Z" fill="#2e962e"/></svg>
<div class="a" style="left:233px;top:396px;width:473px;height:1px;background:#ececec;"></div>
<div class="a t" style="top:382.69px;font-size:11px;line-height:11px;color:#1a1a1a;left:252.5px;letter-spacing:-0.15214285714285783px;">Mappe Radiosity</div>
<svg class="a" style="left:688px;top:381px;" width="12" height="12" viewBox="0 0 12 12"><path d="M7.2 2.6 H10.4 V10.4 H2.6 V6.7" stroke="#1a0f9c" stroke-width="1.4" fill="none"/><path d="M4.2 8.4 H8.8" stroke="#7a86d8" stroke-width="0.9"/><path d="M0.3 1.4 C2.5 0.9 4.8 1.0 5.0 4.2" stroke="#34a034" stroke-width="1.7" fill="none"/><path d="M2.2 3.9 L7.8 3.9 L5.0 6.9 Z" fill="#2e962e"/></svg>
<div class="a" style="left:233px;top:397px;width:473px;height:18px;background:#eaeaea;"></div>
<svg class="a" style="left:238px;top:402px;" width="12" height="8" viewBox="0 0 12 8"><path d="M0.6 0.9 H11 L5.8 6.4 Z" fill="#b2b0e4" stroke="#0a0a20" stroke-width="1.2" stroke-linejoin="round"/></svg>
<div class="a t" style="top:401.49px;font-size:11px;line-height:11px;color:#111;left:253.5px;font-weight:bold;letter-spacing:0.1px;transform:scaleX(1.07);transform-origin:0 0;-webkit-text-stroke:0.15px #111;">Cache Irraggiamento</div>
<svg class="a" style="left:688px;top:399px;" width="12" height="12" viewBox="0 0 12 12"><path d="M7.2 2.6 H10.4 V10.4 H2.6 V6.7" stroke="#1a0f9c" stroke-width="1.4" fill="none"/><path d="M4.2 8.4 H8.8" stroke="#7a86d8" stroke-width="0.9"/><path d="M0.3 1.4 C2.5 0.9 4.8 1.0 5.0 4.2" stroke="#34a034" stroke-width="1.7" fill="none"/><path d="M2.2 3.9 L7.8 3.9 L5.0 6.9 Z" fill="#2e962e"/></svg>
<div class="a" style="left:233px;top:432px;width:473px;height:1px;background:#ececec;"></div>
<div class="a t" style="top:418.69px;font-size:11px;line-height:11px;color:#1a1a1a;left:252.5px;letter-spacing:-0.30714285714285794px;">Generale</div>
<svg class="a" style="left:688px;top:417px;" width="12" height="12" viewBox="0 0 12 12"><path d="M7.2 2.6 H10.4 V10.4 H2.6 V6.7" stroke="#1a0f9c" stroke-width="1.4" fill="none"/><path d="M4.2 8.4 H8.8" stroke="#7a86d8" stroke-width="0.9"/><path d="M0.3 1.4 C2.5 0.9 4.8 1.0 5.0 4.2" stroke="#34a034" stroke-width="1.7" fill="none"/><path d="M2.2 3.9 L7.8 3.9 L5.0 6.9 Z" fill="#2e962e"/></svg>
<div class="a" style="left:233px;top:450px;width:473px;height:1px;background:#ececec;"></div>
<div class="a t" style="top:436.69px;font-size:11px;line-height:11px;color:#1a1a1a;left:252.5px;letter-spacing:-0.1853846153846162px;">Densità Record</div>
<svg class="a" style="left:688px;top:435px;" width="12" height="12" viewBox="0 0 12 12"><path d="M7.2 2.6 H10.4 V10.4 H2.6 V6.7" stroke="#1a0f9c" stroke-width="1.4" fill="none"/><path d="M4.2 8.4 H8.8" stroke="#7a86d8" stroke-width="0.9"/><path d="M0.3 1.4 C2.5 0.9 4.8 1.0 5.0 4.2" stroke="#34a034" stroke-width="1.7" fill="none"/><path d="M2.2 3.9 L7.8 3.9 L5.0 6.9 Z" fill="#2e962e"/></svg>
<div class="a" style="left:233px;top:468px;width:473px;height:1px;background:#ececec;"></div>
<div class="a t" style="top:454.69px;font-size:11px;line-height:11px;color:#1a1a1a;left:252.5px;letter-spacing:-0.29888888888888865px;">Smussatura</div>
<svg class="a" style="left:688px;top:453px;" width="12" height="12" viewBox="0 0 12 12"><path d="M7.2 2.6 H10.4 V10.4 H2.6 V6.7" stroke="#1a0f9c" stroke-width="1.4" fill="none"/><path d="M4.2 8.4 H8.8" stroke="#7a86d8" stroke-width="0.9"/><path d="M0.3 1.4 C2.5 0.9 4.8 1.0 5.0 4.2" stroke="#34a034" stroke-width="1.7" fill="none"/><path d="M2.2 3.9 L7.8 3.9 L5.0 6.9 Z" fill="#2e962e"/></svg>
<div class="a" style="left:233px;top:486px;width:473px;height:1px;background:#ececec;"></div>
<div class="a t" style="top:472.69px;font-size:11px;line-height:11px;color:#1a1a1a;left:252.5px;letter-spacing:-0.4047058823529409px;">Raffinamento Cache</div>
<svg class="a" style="left:688px;top:471px;" width="12" height="12" viewBox="0 0 12 12"><path d="M7.2 2.6 H10.4 V10.4 H2.6 V6.7" stroke="#1a0f9c" stroke-width="1.4" fill="none"/><path d="M4.2 8.4 H8.8" stroke="#7a86d8" stroke-width="0.9"/><path d="M0.3 1.4 C2.5 0.9 4.8 1.0 5.0 4.2" stroke="#34a034" stroke-width="1.7" fill="none"/><path d="M2.2 3.9 L7.8 3.9 L5.0 6.9 Z" fill="#2e962e"/></svg>
<div class="a" style="left:233px;top:504px;width:473px;height:1px;background:#ececec;"></div>
<div class="a t" style="top:490.69px;font-size:11px;line-height:11px;color:#1a1a1a;left:252.5px;letter-spacing:-0.14952380952380956px;">Miglioramento Dettagli</div>
<div class="a" style="left:402px;top:490px;width:12px;height:12px;background:#fff;box-shadow:inset 0 0 0 1px #333;"></div>
<svg class="a" style="left:688px;top:489px;" width="12" height="12" viewBox="0 0 12 12"><path d="M7.2 2.6 H10.4 V10.4 H2.6 V6.7" stroke="#1a0f9c" stroke-width="1.4" fill="none"/><path d="M4.2 8.4 H8.8" stroke="#7a86d8" stroke-width="0.9"/><path d="M0.3 1.4 C2.5 0.9 4.8 1.0 5.0 4.2" stroke="#34a034" stroke-width="1.7" fill="none"/><path d="M2.2 3.9 L7.8 3.9 L5.0 6.9 Z" fill="#2e962e"/></svg>
<div class="a" style="left:233px;top:505px;width:473px;height:18px;background:#eaeaea;"></div>
<svg class="a" style="left:240.5px;top:506.8px;" width="8" height="12" viewBox="0 0 8 12"><path d="M0.9 0.6 V10.9 L6 5.75 Z" fill="#c4c2ec" stroke="#0a0a20" stroke-width="1.15" stroke-linejoin="round"/></svg>
<div class="a t" style="top:509.49px;font-size:11px;line-height:11px;color:#111;left:253.5px;font-weight:bold;letter-spacing:0.1px;transform:scaleX(1.07);transform-origin:0 0;-webkit-text-stroke:0.15px #111;">Dettagli</div>
<svg class="a" style="left:688px;top:507px;" width="12" height="12" viewBox="0 0 12 12"><path d="M7.2 2.6 H10.4 V10.4 H2.6 V6.7" stroke="#1a0f9c" stroke-width="1.4" fill="none"/><path d="M4.2 8.4 H8.8" stroke="#7a86d8" stroke-width="0.9"/><path d="M0.3 1.4 C2.5 0.9 4.8 1.0 5.0 4.2" stroke="#34a034" stroke-width="1.7" fill="none"/><path d="M2.2 3.9 L7.8 3.9 L5.0 6.9 Z" fill="#2e962e"/></svg>
<svg class="a" style="left:709px;top:203px;" width="11" height="8" viewBox="0 0 11 8"><path d="M1.8 6.5 L5.5 2.8 L9.2 6.5" stroke="#c8c8c8" stroke-width="1.6" fill="none"/></svg>
<svg class="a" style="left:709px;top:651px;" width="11" height="8" viewBox="0 0 11 8"><path d="M1.8 2 L5.5 5.7 L9.2 2" stroke="#c8c8c8" stroke-width="1.6" fill="none"/></svg>
<div class="a" style="left:1px;top:666px;width:725px;height:20px;background:#f6f6f6;"></div>
<div class="a" style="left:0px;top:686px;width:726px;height:1px;background:#a0a0a0;"></div>
<svg class="a" style="left:11px;top:671px;" width="8" height="11" viewBox="0 0 8 11"><path d="M1 0.5 L6.5 5.5 L1 10.5 Z" fill="#000"/></svg>
<div class="a t" style="top:671.69px;font-size:11px;line-height:11px;color:#111;left:26px;font-weight:bold;letter-spacing:0.1px;">Sfondo</div>
<div class="a" style="left:0px;top:714px;width:729px;height:1px;background:#dadada;"></div>
<div class="a" style="left:325px;top:691px;width:78px;height:20px;background:#e1e1e1;box-shadow:inset 0 0 0 1px #adadad;"></div>
<div class="a" style="left:382px;top:692px;width:1px;height:18px;background:#b4b4b4;"></div>
<svg class="a" style="left:346px;top:695px;" width="16" height="13" viewBox="0 0 16 13"><defs><radialGradient id="lg" cx="0.45" cy="0.4" r="0.6"><stop offset="0" stop-color="#8a8ab8"/><stop offset="1" stop-color="#3a3a6a"/></radialGradient></defs><path d="M4.6 2.6 L5.6 1 H10.4 L11.4 2.6 H13.6 Q15.2 2.6 15.2 4.2 V10.2 Q15.2 11.8 13.6 11.8 H2.4 Q0.8 11.8 0.8 10.2 V4.2 Q0.8 2.6 2.4 2.6 Z" fill="#222"/><circle cx="8" cy="7.2" r="3.9" fill="#fff"/><circle cx="8" cy="7.2" r="2.9" fill="url(#lg)"/></svg>
<svg class="a" style="left:388px;top:699px;" width="10" height="6" viewBox="0 0 10 6"><path d="M0 0 H10 L5 5.5 Z" fill="#000"/></svg>
<svg class="a" style="left:0;top:0;mix-blend-mode:multiply" width="729" height="715"><path d="M204 208.8 Q216.75 208.0 229.5 209" stroke="#ff0c1c" stroke-width="4.5" fill="none" stroke-linecap="round"/><path d="M220.8 201.5 L229.5 209 L219.5 221.5" stroke="#ff0c1c" stroke-width="4.2" fill="none" stroke-linecap="round" stroke-linejoin="round"/></svg>
<svg class="a" style="left:0;top:0;mix-blend-mode:multiply" width="729" height="715"><path d="M-2 286.6 Q11.8 285.8 25.6 287" stroke="#ff0c1c" stroke-width="5.8" fill="none" stroke-linecap="round"/><path d="M13.3 280.3 L25.6 287 L12.8 297.8" stroke="#ff0c1c" stroke-width="5.2" fill="none" stroke-linecap="round" stroke-linejoin="round"/></svg>
<svg class="a" style="left:0;top:0;mix-blend-mode:multiply" width="729" height="715"><path d="M212.5 333.6 Q229.15 332.59999999999997 245.8 333.4" stroke="#ff0c1c" stroke-width="4.4" fill="none" stroke-linecap="round"/><path d="M235.8 328.3 L245.8 333.4 L234.4 344.6" stroke="#ff0c1c" stroke-width="4.6" fill="none" stroke-linecap="round" stroke-linejoin="round"/></svg>
<svg class="a" style="left:0;top:0;mix-blend-mode:multiply" width="729" height="715"><path d="M212.8 442.8 Q229.15 442.0 245.5 443.6" stroke="#ff0c1c" stroke-width="4.4" fill="none" stroke-linecap="round"/><path d="M236.5 438.6 L245.5 443.6 L234.6 455.5" stroke="#ff0c1c" stroke-width="4.6" fill="none" stroke-linecap="round" stroke-linejoin="round"/></svg>
</body></html>
